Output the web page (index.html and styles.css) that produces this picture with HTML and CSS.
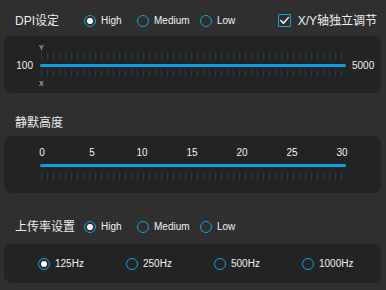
FILE: index.html
```html
<!DOCTYPE html>
<html>
<head>
<meta charset="utf-8">
<link rel="stylesheet" href="styles.css">
</head>
<body>
<div class="app">
  <div class="head head1">
    <div class="title">DPI设定</div>
    <label class="opt w53"><span class="radio on"></span><span>High</span></label>
    <label class="opt w63"><span class="radio"></span><span>Medium</span></label>
    <label class="opt"><span class="radio"></span><span>Low</span></label>
    <label class="check"><span class="box"><svg width="11" height="11" viewBox="0 0 11 11"><path d="M1.8 5.6 L4.4 8.2 L9.4 2.6" fill="none" stroke="#ffffff" stroke-width="1.4" stroke-linecap="round" stroke-linejoin="round"/></svg></span><span>X/Y轴独立调节</span></label>
  </div>
  <div class="panel dpi">
    <div class="axis">Y</div>
    <div class="ticks"></div>
    <div class="track-row"><span class="end lo">100</span><div class="track"></div><span class="end hi">5000</span></div>
    <div class="ticks up"></div>
    <div class="axis x">X</div>
  </div>
  <div class="head head2">
    <div class="title">静默高度</div>
  </div>
  <div class="panel quiet">
    <div class="nums"><span>0</span><span>5</span><span>10</span><span>15</span><span>20</span><span>25</span><span>30</span></div>
    <div class="track q"></div>
    <div class="ticks q"></div>
  </div>
  <div class="head head3">
    <div class="title">上传率设置</div>
    <label class="opt w53"><span class="radio on"></span><span>High</span></label>
    <label class="opt w63"><span class="radio"></span><span>Medium</span></label>
    <label class="opt"><span class="radio"></span><span>Low</span></label>
  </div>
  <div class="panel rate">
    <label class="opt"><span class="radio on"></span><span>125Hz</span></label>
    <label class="opt"><span class="radio"></span><span>250Hz</span></label>
    <label class="opt"><span class="radio"></span><span>500Hz</span></label>
    <label class="opt"><span class="radio"></span><span>1000Hz</span></label>
  </div>
</div>
</body>
</html>
```
FILE: styles.css
```css
* { box-sizing: border-box; }
html, body { margin: 0; padding: 0; }
body {
  background: #2f2f2f;
  font-family: "Liberation Sans", "Noto Sans CJK SC", sans-serif;
  color: #ececec;
  width: 386px;
  height: 290px;
  overflow: hidden;
}
.app { display: flex; flex-direction: column; }
.head { display: flex; align-items: center; padding-left: 15px; }
.head1 { height: 36px; padding-top: 5px; }
.head2 { height: 43px; padding-top: 17px; }
.head3 { height: 51px; padding-top: 16px; }
.title { width: 69px; font-size: 12px; line-height: 16px; color: #ededed; }
.opt { display: flex; align-items: center; gap: 5px; font-size: 10px; line-height: 12px; color: #f2f2f2; }
.w53 { width: 53px; }
.w63 { width: 63px; }
.radio {
  width: 12px; height: 12px; border-radius: 50%;
  border: 1.5px solid #18a3dc;
  display: flex; align-items: center; justify-content: center;
  flex: none;
}
.radio.on::after {
  content: ""; width: 6px; height: 6px; border-radius: 50%; background: #ffffff;
}
.check { margin-left: auto; margin-right: 9px; display: flex; align-items: center; gap: 7px; font-size: 12px; line-height: 14px; color: #f0f0f0; }
.box {
  width: 13px; height: 13px; border: 1.5px solid #18a3dc; border-radius: 1px;
  display: flex; align-items: center; justify-content: center;
}
.box svg { display: block; }
.panel {
  margin: 0 5px 0 4px;
  background: #232323;
  border-radius: 8px;
}
.dpi { height: 57px; padding-top: 8px; }
.axis { margin-left: 35px; font-size: 7px; line-height: 8px; height: 8px; color: #dcdcdc; }
.axis.x { margin-top: 4px; }
.ticks {
  margin-left: 37px; width: 301px; height: 6px; margin-top: 1px;
  background: repeating-linear-gradient(90deg, #1d4254 0 1px, transparent 1px 6px);
}
.ticks.up { margin-top: -1px; }
.track-row { display: flex; align-items: center; height: 11px; margin-top: 1px; }
.end { font-size: 10px; line-height: 11px; color: #f2f2f2; }
.lo { width: 36px; text-align: right; padding-right: 7px; }
.hi { margin-left: 6px; }
.track { width: 306px; height: 3px; background: #0da0e2; border-radius: 2px; }
.quiet { height: 57px; padding-top: 11px; }
.nums { display: flex; justify-content: space-between; margin-left: 28px; width: 320px; font-size: 10px; line-height: 12px; }
.nums span { width: 20px; text-align: center; color: #f2f2f2; }
.track.q { margin-left: 36px; margin-top: 5px; }
.ticks.q { margin-top: 6px; height: 7px; }
.rate {
  height: 39px; padding-top: 14px; padding-left: 34px;
  display: grid; grid-template-columns: repeat(4, 88px); align-items: start;
}
```
